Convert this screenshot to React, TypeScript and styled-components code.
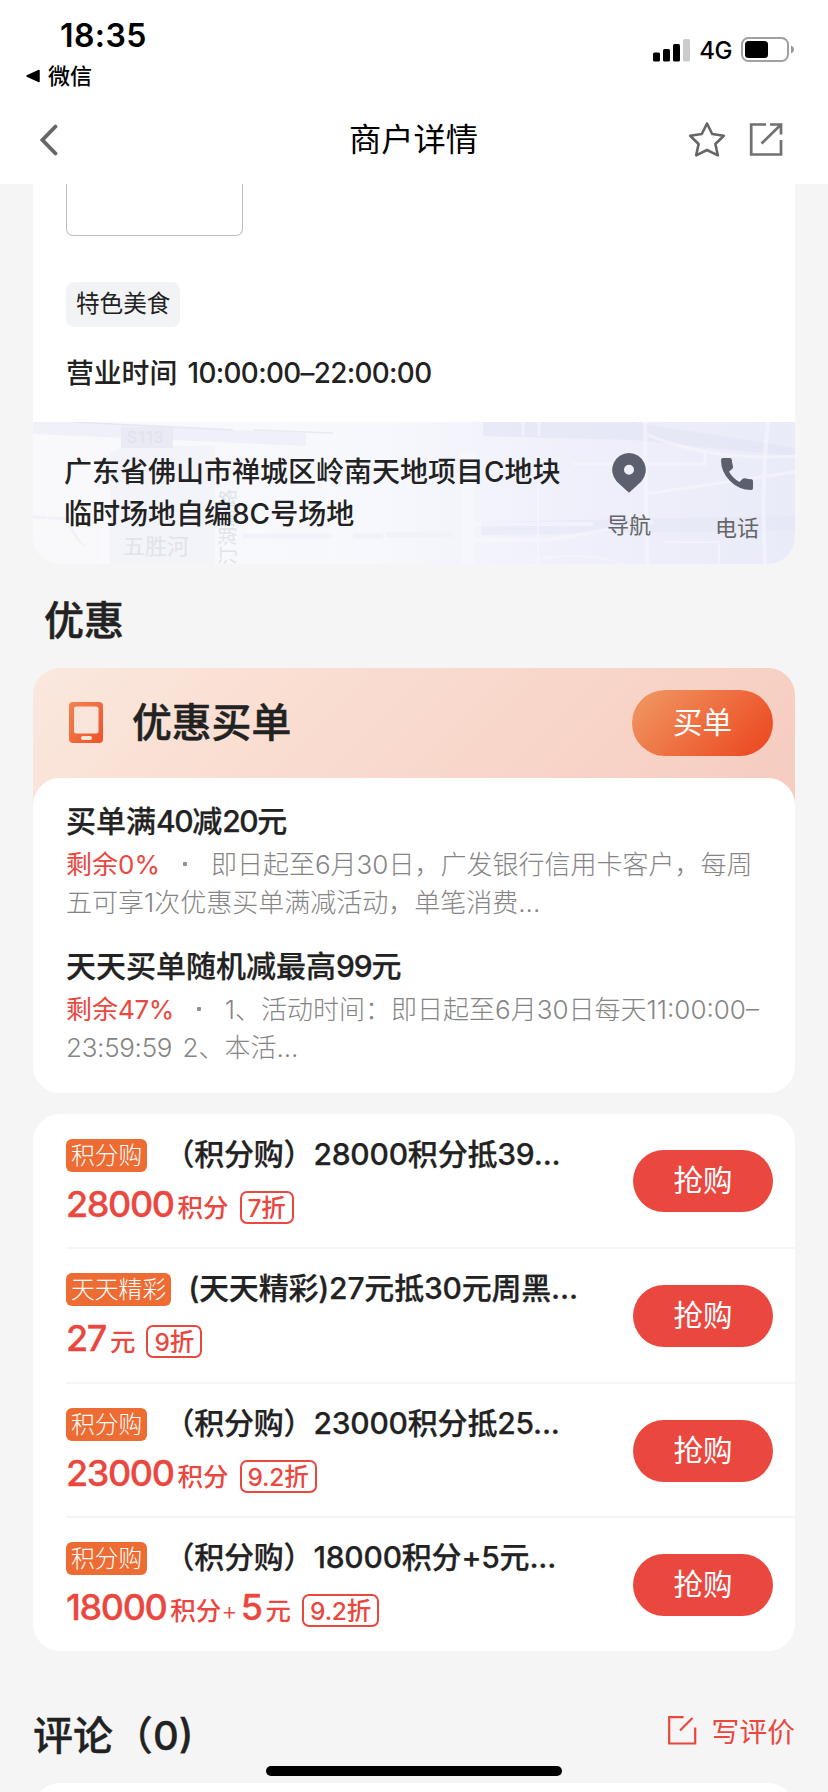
import React from "react";
import styled, { createGlobalStyle } from "styled-components";

const GlobalStyle = createGlobalStyle`
  * { box-sizing: border-box; }
  body {
    margin: 0;
    background: #f5f5f5;
    color: #222;
    font-family: Inter, "Noto Sans CJK SC", sans-serif;
    text-spacing-trim: space-all;
    overflow: hidden;
  }
`;

const Screen = styled.div`
  width: 828px;
  height: 1792px;
  overflow: hidden;
  display: flex;
  flex-direction: column;
  background: #f5f5f5;
`;

const Header = styled.header`
  height: 184px;
  flex: none;
  background: #fff;
  color: #000;
  display: flex;
  flex-direction: column;
`;

const StatusBar = styled.div`
  height: 96px;
  display: flex;
  justify-content: space-between;
  padding: 17px 33px 0 26px;
`;

const StatusLeft = styled.div`
  display: flex;
  flex-direction: column;
`;

const Clock = styled.div`
  padding-left: 34px;
  font-size: 32px;
  line-height: 38px;
  font-weight: 600;
  letter-spacing: 0.4px;
`;

const BackToApp = styled.div`
  display: flex;
  align-items: center;
  gap: 8px;
  margin-top: 6px;
  font-size: 22px;
  line-height: 30px;
  font-weight: 500;
`;

const StatusRight = styled.div`
  display: flex;
  align-items: center;
  height: 25px;
  margin-top: 20px;
`;

const Network = styled.span`
  margin: 2px 9px 0 8px;
  font-size: 24px;
  line-height: 25px;
  font-weight: 500;
  letter-spacing: -0.5px;
`;

const NavBar = styled.div`
  height: 88px;
  display: grid;
  grid-template-columns: 120px 1fr 120px;
  align-items: center;
  padding: 0 45px 0 40px;
`;

const NavTitle = styled.h1`
  margin: 0;
  text-align: center;
  font-size: 32.3px;
  line-height: 48px;
  font-weight: 400;
  padding-left: 4px;
`;

const NavActions = styled.div`
  display: flex;
  justify-content: flex-end;
  gap: 23px;
`;

const MerchantCard = styled.section`
  margin: 0 33px;
  height: 380px;
  flex: none;
  background: #fff;
  border-radius: 0 0 27px 27px;
  overflow: hidden;
  display: flex;
  flex-direction: column;
`;

const Thumb = styled.div`
  width: 177px;
  height: 52px;
  flex: none;
  margin-left: 33px;
  border: 1px solid #bdbdbd;
  border-top: 0;
  border-radius: 0 0 7px 7px;
`;

const Tag = styled.span`
  align-self: flex-start;
  height: 45px;
  margin: 46px 0 0 33px;
  padding: 0 10px;
  border-radius: 8px;
  background: #f2f3f5;
  font-size: 23.6px;
  line-height: 43px;
`;

const Hours = styled.div`
  margin: 25px 0 0 33px;
  height: 42px;
  font-size: 27.8px;
  line-height: 42px;
  font-weight: 500;
  white-space: nowrap;
`;

const HoursRange = styled.span`
  margin-left: 3px;
  letter-spacing: -0.65px;
`;

const MapStrip = styled.div`
  position: relative;
  margin-top: auto;
  height: 142px;
  display: flex;
`;

const MapArt = styled.svg`
  position: absolute;
  inset: 0;
`;

const Address = styled.div`
  position: relative;
  width: 542px;
  padding: 29px 0 0 31px;
  font-size: 28px;
  line-height: 42px;
  font-weight: 500;
  white-space: nowrap;
`;

const MapAction = styled.div<{ $top: number; $gap: number }>`
  position: relative;
  width: 108px;
  padding-top: ${(p) => p.$top}px;
  display: flex;
  flex-direction: column;
  align-items: center;
  gap: ${(p) => p.$gap}px;
  color: #666;
  font-size: 22px;
  line-height: 28px;
`;

const SectionTitle = styled.h2`
  margin: 29px 0 0 44px;
  height: 75px;
  flex: none;
  font-size: 40px;
  line-height: 56px;
  font-weight: 500;
  -webkit-text-stroke: 0.5px currentColor;
`;

const PayCard = styled.section`
  margin: 0 33px;
  flex: none;
  height: 425px;
  border-radius: 27px;
  background: linear-gradient(135deg, #fae8de 0%, #fadfd3 28%, #f6cdc0 95%);
  background-size: 762px 150px;
  background-repeat: no-repeat;
  display: flex;
  flex-direction: column;
`;

const PayHeader = styled.div`
  height: 110px;
  display: flex;
  align-items: center;
  padding: 0 22px 0 36px;
  svg {
    margin-bottom: 1px;
  }
`;

const PayTitle = styled.h3`
  margin: 0 auto 0 29px;
  font-size: 39.8px;
  line-height: 56px;
  font-weight: 500;
  -webkit-text-stroke: 0.5px currentColor;
`;

const Pill = styled.button<{ $primary?: boolean }>`
  flex: none;
  width: ${(p) => (p.$primary ? 141 : 140)}px;
  height: ${(p) => (p.$primary ? 66 : 62)}px;
  margin-top: ${(p) => (p.$primary ? 0 : 1.5)}px;
  border: 0;
  padding: 0 0 2px;
  border-radius: 33px;
  background: ${(p) =>
    p.$primary ? "linear-gradient(135deg, #f09661 5%, #ec4a22 92%)" : "#ea473f"};
  color: #fff;
  font-family: inherit;
  font-size: 29.5px;
  line-height: 44px;
`;

const PayBody = styled.div`
  height: 315px;
  border-radius: 27px;
  background: #fff;
  padding: 21px 0 0 33px;
`;

const Offer = styled.article`
  height: 144.5px;
`;

const OfferTitle = styled.h4`
  margin: 0;
  font-size: 30px;
  line-height: 44px;
  font-weight: 500;
  -webkit-text-stroke: 0.25px currentColor;
`;

const Tight = styled.span<{ $by: number }>`
  letter-spacing: -${(p) => p.$by}px;
`;

const OfferText = styled.p`
  margin: 3px 0 0;
  font-size: 26px;
  line-height: 38px;
  color: #858585;
  white-space: nowrap;
  font-weight: 300;
`;

const Remaining = styled.span`
  color: #ea473f;
  font-weight: 400;
`;

const Dot = styled.span`
  display: inline-block;
  width: 4px;
  height: 4px;
  margin: 0 24px 8px 23px;
  border-radius: 1px;
  background: #909090;
  vertical-align: baseline;
`;

const ClockSpan = styled.span`
  margin-right: 3px;
  letter-spacing: -0.3px;
`;

const DealCard = styled.section`
  margin: 21px 33px 0;
  flex: none;
  height: 537px;
  border-radius: 27px;
  background: #fff;
  padding: 0 0 0 33px;
`;

const Deal = styled.article`
  height: 133px;
  display: flex;
  align-items: center;
  justify-content: space-between;
  padding-right: 22px;
  & + & {
    height: 134.5px;
    border-top: 2px solid #f5f5f5;
  }
`;

const DealInfo = styled.div`
  height: 132px;
  padding-top: 17px;
`;

const DealHead = styled.div`
  display: flex;
  align-items: center;
  gap: 17px;
  height: 44px;
`;

const DealTag = styled.span`
  height: 33px;
  margin-top: 3px;
  padding: 0 5px;
  border-radius: 6px;
  background: #ed6c33;
  color: #fff;
  font-size: 23.8px;
  line-height: 33px;
  font-weight: 300;
`;

const DealTitle = styled.h4`
  margin: 0;
  font-size: 30px;
  line-height: 44px;
  font-weight: 500;
  white-space: nowrap;
  letter-spacing: -0.2px;
  -webkit-text-stroke: 0.25px currentColor;
`;

const PriceRow = styled.div`
  display: flex;
  align-items: baseline;
  height: 48px;
  margin-top: 4px;
  color: #ea473f;
  line-height: 48px;
  font-weight: 500;
`;

const Amount = styled.span`
  font-size: 36px;
  letter-spacing: -1.4px;
  -webkit-text-stroke: 0.3px currentColor;
`;

const Unit = styled.span`
  margin-left: 4px;
  font-size: 25.5px;
`;

const Plus = styled.span`
  margin-right: 3px;
  font-size: 25px;
  font-weight: 300;
`;

const Discount = styled.span`
  height: 33px;
  margin-left: 11px;
  padding: 0 6px;
  border: 2px solid #ea473f;
  border-radius: 7px;
  font-size: 24.5px;
  line-height: 30px;
  letter-spacing: -0.2px;
`;

const ReviewHeader = styled.div`
  flex: none;
  height: 132px;
  margin: 0 33px;
  padding-top: 57px;
  display: flex;
  justify-content: space-between;
  align-items: flex-start;
`;

const ReviewTitle = styled.h2`
  margin: 0;
  font-size: 40px;
  line-height: 56px;
  font-weight: 500;
  -webkit-text-stroke: 0.3px currentColor;
`;

const WriteReview = styled.div`
  display: flex;
  align-items: center;
  gap: 15px;
  color: #ea473f;
  font-size: 27.8px;
  line-height: 46px;
  margin-top: 1px;
  svg {
    margin-bottom: 4px;
  }
`;

const ReviewCard = styled.div`
  flex: none;
  height: 60px;
  margin: 0 33px;
  border-radius: 27px;
  background: #fff;
`;

const HomeIndicator = styled.div`
  position: fixed;
  left: 266px;
  top: 1766px;
  width: 296px;
  height: 10px;
  border-radius: 5px;
  background: #000;
`;

const SignalIcon = () => (
  <svg width="38" height="24" viewBox="0 0 38 24">
    <rect x="0" y="14.5" width="7" height="9" rx="1.6" />
    <rect x="10" y="11" width="7" height="12.5" rx="1.6" />
    <rect x="20" y="6" width="7" height="17.5" rx="1.6" />
    <rect x="30" y="1" width="7" height="22.5" rx="1.6" fill="#ccc" />
  </svg>
);

const BatteryIcon = () => (
  <svg width="54" height="25" viewBox="0 0 54 25">
    <rect x="1" y="1" width="46" height="23" rx="6.5" fill="none" stroke="#a0a0a0" strokeWidth="2" />
    <rect x="4" y="4" width="23" height="17" rx="3.5" />
    <path d="M50 8.500c2 .8 3 2.300 3 4s-1 3.200-3 4z" fill="#999" />
  </svg>
);

const BackTriangle = () => (
  <svg width="14" height="14" viewBox="0 0 14 14">
    <path d="M1 7 L13 1.500 V12.500 Z" stroke="#000" strokeWidth="1.500" strokeLinejoin="round" />
  </svg>
);

const ChevronLeft = () => (
  <svg width="18" height="32" viewBox="0 0 18 32" fill="none" stroke="#666" strokeWidth="3.800" strokeLinecap="round">
    <path d="M15.500 2.500 L2.500 16 L15.500 29.500" />
  </svg>
);

const StarIcon = () => (
  <svg width="38" height="36" viewBox="0 0 38 36" fill="none" stroke="#666" strokeWidth="2.600" strokeLinejoin="round">
    <path d="M19 1.500 L24.200 12 L35.800 13.800 L27.400 22 L29.800 33.300 L19 28 L8.200 33.300 L10.600 22 L2.200 13.800 L13.800 12 Z" />
  </svg>
);

const ShareIcon = () => (
  <svg width="34" height="36" viewBox="0 0 34 36" fill="none" stroke="#707070" strokeWidth="2.700">
    <path d="M17 2.500 H2.200 V32.500 H32 V18 M21 2.500 H32 V12.500 M32 2.500 L12.500 21.500" />
  </svg>
);

const PinIcon = () => (
  <svg width="34" height="40" viewBox="0 0 34 40">
    <path
      fillRule="evenodd"
      fill="#5c5f6d"
      d="M17 0 A17 17 0 0 1 29.300 28.500 L17 39.800 L4.700 28.500 A17 17 0 0 1 17 0 Z M17 11.800 a5 5 0 1 0 0 10 a5 5 0 0 0 0-10 Z"
    />
  </svg>
);

const PhoneIcon = () => (
  <svg width="32" height="32" viewBox="0 0 32 32">
    <path
      fill="#5c5f6d"
      d="M2 0 H9 Q10.500 0 10.800 1.800 Q11 5.500 12 8.200 Q12.400 9.700 11.300 10.800 L8 13.800 Q12 20.500 18.500 24 L21.300 21.100 Q22.500 20 24 20.300 Q27.500 21.200 30.300 21.300 Q32 21.500 32 23 V30.200 Q32 32 30.200 32 Q18 32 9 23 Q0 14 0 2 Q0 0 2 0 Z"
    />
  </svg>
);

const TabletIcon = () => (
  <svg width="34" height="41" viewBox="0 0 34 41">
    <defs>
      <linearGradient id="tablet" x1="0" y1="0" x2="1" y2="1">
        <stop offset="0" stopColor="#f28452" />
        <stop offset="1" stopColor="#ee5228" />
      </linearGradient>
    </defs>
    <rect width="34" height="41" rx="4" fill="url(#tablet)" />
    <rect x="5" y="4.500" width="24.500" height="27" rx="2.500" fill="#fae5db" />
    <rect x="12" y="34" width="11" height="4" rx="2" fill="#fae5db" />
  </svg>
);

const WriteIcon = () => (
  <svg width="29" height="30" viewBox="0 0 29 30" fill="none" stroke="#ea473f" strokeWidth="2.200">
    <path d="M15.500 2.200 H1.200 V28.500 H27.200 V12.500 M24.500 3 L12 15.500" />
  </svg>
);

const MapBackground = () => (
  <MapArt width="762" height="142" viewBox="0 0 762 142">
    <defs>
      <linearGradient id="ground" x1="0" y1="0" x2="1" y2="0">
        <stop offset="0" stopColor="#f9f9fc" />
        <stop offset="0.450" stopColor="#f7f8fd" />
        <stop offset="0.700" stopColor="#eff0fa" />
        <stop offset="1" stopColor="#e9ebf8" />
      </linearGradient>
    </defs>
    <rect width="762" height="142" fill="url(#ground)" />
    <path d="M0 0 H50 L200 8 L273 11 V24 L0 12 Z" fill="#f0f0f8" />
    <path d="M40 0 L200 8" stroke="#e6e6f1" strokeWidth="1.500" />
    <path d="M220 8 L300 11" stroke="#e9e9f3" strokeWidth="1.500" />
    <path d="M450 0 H600 L762 26 V34 L600 18 L450 14 Z" fill="#e4e6f5" opacity="0.700" />
    <path d="M77 32 L90 24 H182 V142 H77 Z" fill="#f3f3fa" />
    <rect x="88" y="5" width="52" height="21" fill="#eaeaf5" />
    <path d="M210 114 H300 M320 114 H350 M353 113 H420" stroke="#f0f1f9" strokeWidth="5" fill="none" />
    <path d="M0 95 L35 97 Q40 115 52 124" stroke="#f1f1f8" strokeWidth="3" fill="none" />
    <path d="M448 100 L762 94 V108 L448 113 Z" fill="#e3e6f5" opacity="0.500" />
    <g stroke="#fbfbff" fill="none" opacity="0.450">
      <path d="M70 26 V142 M300 26 V142" strokeWidth="8" />
      <path d="M435 30 V142" strokeWidth="14" />
      <path d="M434 102 H560 M434 118 H515 L620 100" strokeWidth="4" />
      <path d="M612 0 L614 142 M735 0 Q728 60 732 142" strokeWidth="4" />
      <path d="M505 60 V142 M14 30 V100 M34 20 Q18 60 52 125" strokeWidth="2" />
      <path d="M490 0 V14 M506 0 V14 M612 12 Q680 40 762 34 M540 42 H672 V30 M612 72 L762 50" strokeWidth="3" />
      <path d="M630 120 H686 V142 M500 138 Q550 128 590 142" strokeWidth="2" />
    </g>
    <g fill="#e1e2ea">
      <text x="94" y="21" fontSize="16" fontWeight="500" fontFamily="Inter" letterSpacing="1">S113</text>
      <text x="90" y="132" fontSize="22">五胜河</text>
      <text x="0" y="0" fontSize="19" transform="translate(202 143) rotate(-90)">汀湖新路</text>
    </g>
  </MapArt>
);

interface DealData {
  tag: string;
  title: string;
  price: [string, string][];
  discount: string;
}

const deals: DealData[] = [
  { tag: "积分购", title: "（积分购）28000积分抵39...", price: [["28000", "积分"]], discount: "7折" },
  { tag: "天天精彩", title: "(天天精彩)27元抵30元周黑...", price: [["27", "元"]], discount: "9折" },
  { tag: "积分购", title: "（积分购）23000积分抵25...", price: [["23000", "积分"]], discount: "9.2折" },
  { tag: "积分购", title: "（积分购）18000积分+5元...", price: [["18000", "积分"], ["5", "元"]], discount: "9.2折" },
];

const DealRow = ({ deal }: { deal: DealData }) => (
  <Deal>
    <DealInfo>
      <DealHead>
        <DealTag>{deal.tag}</DealTag>
        <DealTitle>{deal.title}</DealTitle>
      </DealHead>
      <PriceRow>
        {deal.price.map(([amount, unit], i) => (
          <React.Fragment key={unit}>
            {i > 0 && <Plus>+</Plus>}
            <Amount>{amount}</Amount>
            <Unit>{unit}</Unit>
          </React.Fragment>
        ))}
        <Discount>{deal.discount}</Discount>
      </PriceRow>
    </DealInfo>
    <Pill>抢购</Pill>
  </Deal>
);

export default function App() {
  return (
    <Screen>
      <GlobalStyle />
      <Header>
        <StatusBar>
          <StatusLeft>
            <Clock>18:35</Clock>
            <BackToApp>
              <BackTriangle />
              微信
            </BackToApp>
          </StatusLeft>
          <StatusRight>
            <SignalIcon />
            <Network>4G</Network>
            <BatteryIcon />
          </StatusRight>
        </StatusBar>
        <NavBar>
          <ChevronLeft />
          <NavTitle>商户详情</NavTitle>
          <NavActions>
            <StarIcon />
            <ShareIcon />
          </NavActions>
        </NavBar>
      </Header>

      <MerchantCard>
        <Thumb />
        <Tag>特色美食</Tag>
        <Hours>
          营业时间 <HoursRange>10:00:00–22:00:00</HoursRange>
        </Hours>
        <MapStrip>
          <MapBackground />
          <Address>
            广东省佛山市禅城区岭南天地项目C地块
            <br />
            临时场地自编8C号场地
          </Address>
          <MapAction $top={31} $gap={18}>
            <PinIcon />
            导航
          </MapAction>
          <MapAction $top={36} $gap={24}>
            <PhoneIcon />
            电话
          </MapAction>
        </MapStrip>
      </MerchantCard>

      <SectionTitle>优惠</SectionTitle>

      <PayCard>
        <PayHeader>
          <TabletIcon />
          <PayTitle>优惠买单</PayTitle>
          <Pill $primary>买单</Pill>
        </PayHeader>
        <PayBody>
          <Offer>
            <OfferTitle>
              买单满<Tight $by={1.4}>40</Tight>减<Tight $by={1.4}>20</Tight>元
            </OfferTitle>
            <OfferText>
              <Remaining>剩余0%</Remaining>
              <Dot />
              即日起至6月30日，广发银行信用卡客户，每周
              <br />
              五可享1次优惠买单满减活动，单笔消费...
            </OfferText>
          </Offer>
          <Offer>
            <OfferTitle>
              天天买单随机减最高<Tight $by={1.2}>99</Tight>元
            </OfferTitle>
            <OfferText>
              <Remaining>
                剩余<Tight $by={0.4}>47%</Tight>
              </Remaining>
              <Dot />
              1、活动时间：即日起至6月30日每天11:00:00–
              <br />
              <ClockSpan>23:59:59</ClockSpan> 2、本活...
            </OfferText>
          </Offer>
        </PayBody>
      </PayCard>

      <DealCard>
        {deals.map((deal) => (
          <DealRow key={deal.title} deal={deal} />
        ))}
      </DealCard>

      <ReviewHeader>
        <ReviewTitle>评论（0)</ReviewTitle>
        <WriteReview>
          <WriteIcon />
          写评价
        </WriteReview>
      </ReviewHeader>
      <ReviewCard />
      <HomeIndicator />
    </Screen>
  );
}
